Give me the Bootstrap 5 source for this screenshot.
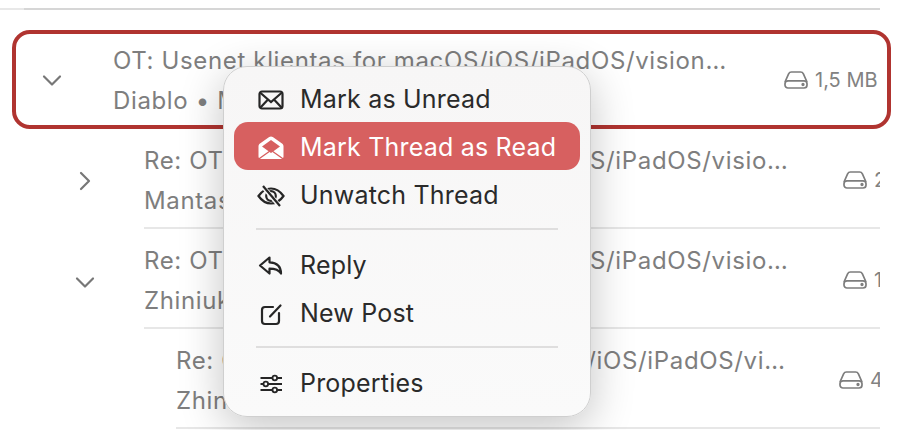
<!DOCTYPE html>
<html lang="en">

<head>
    <meta charset="UTF-8">
    <meta name="viewport" content="width=device-width, initial-scale=1.0">
    <title>Thread context menu</title>
    <link href="https://cdn.jsdelivr.net/npm/bootstrap@5.3.2/dist/css/bootstrap.min.css" rel="stylesheet">
    <style>
        body {
            height: 430px;
            overflow: hidden;
            background: #fff;
            font-family: Inter, "Liberation Sans", sans-serif;
        }

        .stage {
            height: 430px;
            overflow: hidden;
        }

        .top-rule {
            width: 880px;
            height: 2px;
            margin-top: 8px;
            margin-bottom: 20px;
            background: linear-gradient(90deg, #e8e8e8 24px, #d6d6d6 24px);
        }

        /* selected thread */
        .thread-sel {
            width: 879px;
            height: 99px;
            margin-left: 12px;
            border: 4px solid #b03430;
            border-radius: 18px;
        }

        .thread-sel .chev-slot { width: 97px; padding-left: 26px; }
        .thread-sel .size-col { width: 94px; margin-right: 9px; }
        .thread-sel .row-text { padding-top: 2px; }

        .thread-row {
            width: 880px;
            height: 100px;
            overflow: hidden;
        }

        .thread-row .size-col { width: 37px; padding-top: 4px; }
        .thread-row .row-text { padding-top: 5px; }
        .lvl-1 .chev-slot { width: 144px; padding-left: 75px; padding-top: 4px; }
        .lvl-2 .chev-slot { width: 176px; }
        .lvl-2 .size-col { width: 41px; }

        .row-body {
            min-width: 0;
            border-bottom: 2px solid #e7e7e7;
        }

        .thread-sel .row-body { border-bottom: 0; }

        .row-text {
            min-width: 0;
            color: #7e7e7e;
            font-size: 24px;
            line-height: 40px;
            letter-spacing: .64px;
            white-space: nowrap;
        }

        .size-col {
            flex: none;
            overflow: hidden;
            color: #828282;
            font-size: 20px;
            white-space: nowrap;
        }

        .disk-ico { flex: none; width: 24px; height: 18px; margin-right: 7px; }
        .chev-ico { width: 20px; height: 20px; }
        .chev-down { margin-top: 2px; }

        /* context menu */
        .ctx-menu {
            left: 223px;
            top: 66px;
            width: 368px;
            height: 351px;
            padding: 7px 10px 10px;
            background: linear-gradient(180deg, #f7f6f6, #fafafa);
            border: 1px solid #cfcfcf;
            border-radius: 24px;
            box-shadow: 0 10px 44px rgba(0, 0, 0, .24);
        }

        .ctx-menu .dropdown-item {
            height: 48px;
            padding: 3px 0 0 23px;
            gap: 15px;
            color: #2a2a2a;
            font-size: 25px;
            letter-spacing: .2px;
            border-radius: 14px;
        }

        .ctx-menu .dropdown-item.active {
            background: #d76060;
            color: #fff;
        }

        .ctx-menu .dropdown-divider {
            margin: 10px 22px;
            height: 2px;
            border: 0;
            background: #dfdede;
            opacity: 1;
        }

        .menu-ico { flex: none; width: 28px; height: 26px; }
    </style>
</head>

<body>
    <div class="stage position-relative">
        <div class="top-rule"></div>

        <!-- Selected thread -->
        <div class="thread-sel d-flex">
            <div class="chev-slot d-flex align-items-center">
                <svg class="chev-ico" viewBox="0 0 20 20" fill="none" stroke="#777" stroke-width="2.2" stroke-linecap="round" stroke-linejoin="round"><path d="M2 6.500l8 8 8-8"/></svg>
            </div>
            <div class="row-body d-flex flex-grow-1 align-items-center">
                <div class="row-text flex-grow-1">
                    <div>OT: Usenet klientas for macOS/iOS/iPadOS/vision…</div>
                    <div>Diablo • Mantas</div>
                </div>
                <div class="size-col d-flex align-items-center">
                    <svg class="disk-ico" viewBox="0 0 24 18" fill="none" stroke="#7d7d7d" stroke-width="1.700"><path d="M1 11l3.600-8.200C5.200 1.600 6 1 7.400 1h9.200c1.400 0 2.200.6 2.800 1.800L23 11"/><rect x="1" y="9.800" width="22" height="7.200" rx="3"/><circle cx="19" cy="13.500" r=".8" fill="#7d7d7d"/></svg>
                    <span>1,5 MB</span>
                </div>
            </div>
        </div>

        <!-- Replies -->
        <div class="thread-row lvl-1 d-flex">
            <div class="chev-slot d-flex align-items-center">
                <svg class="chev-ico" viewBox="0 0 20 20" fill="none" stroke="#777" stroke-width="2.2" stroke-linecap="round" stroke-linejoin="round"><path d="M6 2l8 8-8 8"/></svg>
            </div>
            <div class="row-body d-flex flex-grow-1 align-items-center">
                <div class="row-text flex-grow-1">
                    <div>Re: OT: Usenet klientas for macOS/iOS/iPadOS/visio…</div>
                    <div>Mantas</div>
                </div>
                <div class="size-col d-flex align-items-center">
                    <svg class="disk-ico" viewBox="0 0 24 18" fill="none" stroke="#7d7d7d" stroke-width="1.700"><path d="M1 11l3.600-8.200C5.200 1.600 6 1 7.400 1h9.200c1.400 0 2.200.6 2.800 1.800L23 11"/><rect x="1" y="9.800" width="22" height="7.200" rx="3"/><circle cx="19" cy="13.500" r=".8" fill="#7d7d7d"/></svg>
                    <span>2,1 MB</span>
                </div>
            </div>
        </div>

        <div class="thread-row lvl-1 d-flex">
            <div class="chev-slot d-flex align-items-center">
                <svg class="chev-ico chev-down" viewBox="0 0 20 20" fill="none" stroke="#777" stroke-width="2.2" stroke-linecap="round" stroke-linejoin="round"><path d="M2 6.500l8 8 8-8"/></svg>
            </div>
            <div class="row-body d-flex flex-grow-1 align-items-center">
                <div class="row-text flex-grow-1">
                    <div>Re: OT: Usenet klientas for macOS/iOS/iPadOS/visio…</div>
                    <div>Zhiniuk</div>
                </div>
                <div class="size-col d-flex align-items-center">
                    <svg class="disk-ico" viewBox="0 0 24 18" fill="none" stroke="#7d7d7d" stroke-width="1.700"><path d="M1 11l3.600-8.200C5.200 1.600 6 1 7.400 1h9.200c1.400 0 2.200.6 2.800 1.800L23 11"/><rect x="1" y="9.800" width="22" height="7.200" rx="3"/><circle cx="19" cy="13.500" r=".8" fill="#7d7d7d"/></svg>
                    <span>1,2 MB</span>
                </div>
            </div>
        </div>

        <div class="thread-row lvl-2 d-flex">
            <div class="chev-slot"></div>
            <div class="row-body d-flex flex-grow-1 align-items-center">
                <div class="row-text flex-grow-1">
                    <div>Re: OT: Usenet klientas for macOS/iOS/iPadOS/vi…</div>
                    <div>Zhiniuk</div>
                </div>
                <div class="size-col d-flex align-items-center">
                    <svg class="disk-ico" viewBox="0 0 24 18" fill="none" stroke="#7d7d7d" stroke-width="1.700"><path d="M1 11l3.600-8.200C5.200 1.600 6 1 7.400 1h9.200c1.400 0 2.200.6 2.800 1.800L23 11"/><rect x="1" y="9.800" width="22" height="7.200" rx="3"/><circle cx="19" cy="13.500" r=".8" fill="#7d7d7d"/></svg>
                    <span>4,3 KB</span>
                </div>
            </div>
        </div>

        <!-- Context menu -->
        <ul class="dropdown-menu show ctx-menu position-absolute">
            <li><a class="dropdown-item d-flex align-items-center" href="#">
                <svg class="menu-ico" viewBox="0 0 28 26" fill="none" stroke="#262626" stroke-width="2.200"><rect x="2.500" y="4.500" width="23" height="17" rx="2.500"/><path d="M3 5.500l11 9.500L25 5.500M3.500 20.500l7.500-8M24.500 20.500l-7.500-8"/></svg>
                Mark as Unread</a></li>
            <li><a class="dropdown-item active d-flex align-items-center" href="#">
                <svg class="menu-ico" viewBox="0 0 28 26"><path fill="#fff" fill-rule="evenodd" d="M14 1.500c.6 0 1.200.2 1.800.6l9.200 6.400c.9.6 1.500 1.500 1.500 2.800v10.200c0 1.500-.9 2.500-2.500 2.500H4c-1.600 0-2.500-1-2.500-2.500V11.300c0-1.300.6-2.200 1.500-2.800l9.200-6.400c.6-.4 1.200-.6 1.800-.6zM5 11.500l9 6.500 9-6.500-9-6.500z"/><path fill="none" stroke="#d76060" stroke-width="1.400" d="M1 24.500l13-9.200 13 9.200"/></svg>
                Mark Thread as Read</a></li>
            <li><a class="dropdown-item d-flex align-items-center" href="#">
                <svg class="menu-ico" viewBox="0 0 28 26" fill="none" stroke="#262626" stroke-width="2.200"><path d="M1.500 13C5 8 9 5.500 14 5.500S23 8 26.500 13C23 18 19 20.500 14 20.500S5 18 1.500 13z"/><circle cx="14" cy="13" r="4.800"/><path d="M5.500 3l17 20" stroke="#f7f6f6" stroke-width="4.500"/><path d="M6 3l17 20"/></svg>
                Unwatch Thread</a></li>
            <li><hr class="dropdown-divider"></li>
            <li><a class="dropdown-item d-flex align-items-center" href="#">
                <svg class="menu-ico" viewBox="0 0 28 26" fill="none" stroke="#262626" stroke-width="2.200" stroke-linejoin="round" stroke-linecap="round"><path d="M12.500 4.500L3 12.500l9.500 8v-4.800c5.500 0 9 .8 11.500 4.800 0-6.500-3.800-10.800-11.500-11.200z"/></svg>
                Reply</a></li>
            <li><a class="dropdown-item d-flex align-items-center" href="#">
                <svg class="menu-ico" viewBox="0 0 28 26" fill="none" stroke="#262626" stroke-width="2.200" stroke-linecap="round"><path d="M16 6H8a3 3 0 0 0-3 3v11a3 3 0 0 0 3 3h11a3 3 0 0 0 3-3v-8"/><path d="M13 15.500L23.500 4.500"/></svg>
                New Post</a></li>
            <li><hr class="dropdown-divider"></li>
            <li><a class="dropdown-item d-flex align-items-center" href="#">
                <svg class="menu-ico" viewBox="0 0 28 26" fill="none" stroke="#262626" stroke-width="1.800"><path d="M3.500 7h12M20 7h5M3.500 13h3M11 13h14M3.500 19h12M20 19h5"/><circle cx="17.800" cy="7" r="2.300"/><circle cx="8.800" cy="13" r="2.300"/><circle cx="17.800" cy="19" r="2.300"/></svg>
                Properties</a></li>
        </ul>
    </div>

    <script src="https://cdn.jsdelivr.net/npm/bootstrap@5.3.2/dist/js/bootstrap.bundle.min.js"></script>
</body>

</html>
